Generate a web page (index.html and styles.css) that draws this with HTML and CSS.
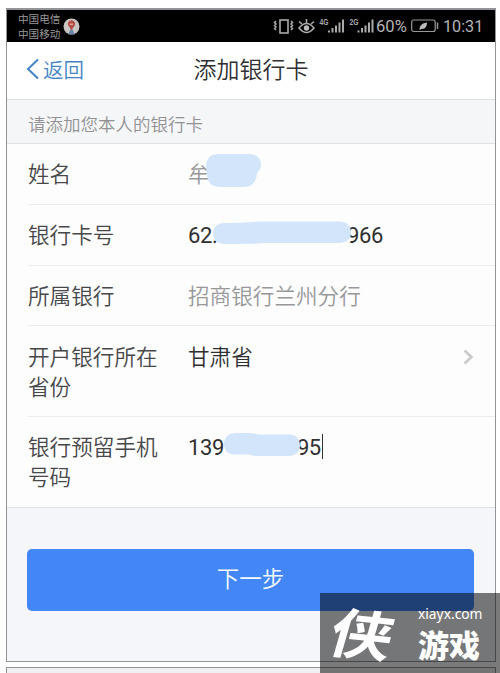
FILE: index.html
```
<!DOCTYPE html>
<html lang="zh-CN">
<head>
<meta charset="utf-8">
<title>添加银行卡</title>
<link rel="stylesheet" href="styles.css">
</head>
<body>
<main class="phone">
  <div class="status">
    <div class="carriers"><span>中国电信</span><span>中国移动</span></div>
    <svg class="pin" width="17" height="17" viewBox="0 0 17 17"><circle cx="8.5" cy="8.5" r="8" fill="#c9c5c3"/><path d="M5 16.5 8.5 9.5l3.5 7z" fill="#7084a5"/><path d="M8.500 12 5.700 8a3.500 3.500 0 1 1 5.600 0z" fill="#b74842"/><path d="M6.800 6.200h3.400" stroke="#ddc" stroke-width="1"/></svg>
    <svg class="icons" width="104" height="22" viewBox="0 0 104 22">
      <g fill="none" stroke="#aaa" stroke-width="1.6">
        <rect x="7" y="5" width="8" height="13"/>
        <path d="M3 6 1.500 7.500 3 9 1.500 10.500 3 12 1.500 13.500 3 15M18 6l1.500 1.500L18 9l1.500 1.500L18 12l1.500 1.500L18 15" stroke-width="1.500"/>
        <path d="M26 13q7.500-9 15 0-7.500 9-15 0zM26 6.500l3 2.500M33.500 4v4M41 6.500l-3 2.500"/>
      </g>
      <circle cx="33.500" cy="13" r="2.700" fill="#bbb"/>
      <g fill="#aaa"><path d="M55 15.500h2v2h-2zM58.500 13h2v4.500h-2zM62 10.500h2v7h-2zM65.500 7.500h2v10h-2zM69 4.500h2v13h-2z"/><path d="M84.500 15.500h2v2h-2zM88 13h2v4.500h-2zM91.500 10.500h2v7h-2zM95 7.500h2v10h-2zM98.500 4.500h2v13h-2z"/></g>
      <g class="net"><text x="46.500" y="10" textLength="9" lengthAdjust="spacingAndGlyphs">4G</text><text x="76.500" y="10" textLength="9" lengthAdjust="spacingAndGlyphs">2G</text></g>
    </svg>
    <span class="percent">60%</span>
    <svg class="battery" width="28" height="14" viewBox="0 0 28 14"><rect x=".7" y="1" width="23.500" height="11.500" rx="2" fill="none" stroke="#999" stroke-width="1.200"/><path d="M26.500 3.500v6.500" stroke="#999" stroke-width="1.500"/><path d="M8.500 10.500q0-6 7.500-7Q16 10.500 10.500 10L8.500 11z" fill="#bbb"/></svg>
    <span class="time">10:31</span>
  </div>
  <header class="nav">
    <a class="back"><svg width="14" height="22" viewBox="0 0 14 22"><path d="M12 1.500 2 11l10 9.500" fill="none" stroke="#4584c4" stroke-width="2"/></svg>返回</a>
    <h1>添加银行卡</h1>
  </header>
  <p class="notice">请添加您本人的银行卡</p>
  <section class="form">
    <div class="row"><label>姓名</label><div class="value muted">牟
      <svg class="mask name-mask" width="56" height="34" viewBox="0 0 56 34"><path d="M12 0H44Q54 1 55 10 55 16 51 19 50 33 38 33H13Q1 32 1 20L0 12Q1 0 12 0z"/></svg></div></div>
    <div class="row"><label>银行卡号</label><div class="value number card"><span>62.</span><span>966</span>
      <svg class="mask card-mask" width="139" height="24" viewBox="0 0 139 24"><path d="M11 2q20 0 34-1.500h82q11 1 11 11.500 0 9-12 10H50q-5 1-39 1Q0 22 0 12 1 2 11 2z"/></svg></div></div>
    <div class="row short"><label>所属银行</label><div class="value muted">招商银行兰州分行</div></div>
    <div class="row tall province"><label>开户银行所在省份</label><div class="value">甘肃省</div>
      <svg class="chevron" width="11" height="16" viewBox="0 0 11 16"><path d="m1.500 1.500 7 6.500-7 6.500" fill="none" stroke="#c9c9cb" stroke-width="2.500"/></svg></div>
    <div class="row tall"><label>银行预留手机号码</label><div class="value number mobile"><span>139</span><span>95</span><i class="caret"></i>
      <svg class="mask mobile-mask" width="78" height="24" viewBox="0 0 78 24"><path d="M12 0h16q5 1 8 1.500h30Q77 2 77 13q0 9-11 10H34q-5 0-8-1.500H12Q1 21 1 11 1 1 12 0z"/></svg></div></div>
  </section>
  <button class="next">下一步</button>
</main>
<div class="next-frame"></div>
<aside class="watermark">
  <span class="brush">侠</span>
  <div class="brand"><span class="site">xiayx.com</span><strong>游戏</strong></div>
</aside>
</body>
</html>
```

FILE: styles.css
```
* { box-sizing: border-box; }
body {
  margin: 0;
  width: 500px;
  height: 673px;
  padding: 8px 4px 0 6px;
  overflow: hidden;
  position: relative;
  background: #fff;
  font-family: Roboto, "Noto Sans CJK SC", sans-serif;
  font-weight: 350;
}
.phone {
  height: 654px;
  border: 1px solid #929497;
  border-top-width: 2px;
  background: #f5f6fa;
}
.status {
  height: 32px;
  background: #000;
  color: #b4b4b4;
  display: flex;
  align-items: center;
  padding-left: 11px;
  font-weight: 400;
}
.carriers {
  width: 44px;
  display: flex;
  flex-direction: column;
  font-size: 10.6px;
  line-height: 15px;
  color: #999;
  white-space: nowrap;
  padding-top: 2px;
}
.pin { margin-left: 1px; }
.icons { margin-left: 193px; flex: none; }
.net text { font: 700 9px "Liberation Sans", sans-serif; fill: #aaa; }
.percent { width: 35px; font-size: 16.6px; margin-left: -1px; }
.battery { flex: none; }
.time { margin-left: 4px; font-size: 16.2px; }
.nav {
  height: 58px;
  display: grid;
  grid-template-columns: 150px 1fr 150px;
  align-items: center;
  background: #fff;
  border-bottom: 1px solid #dcdee2;
  padding-bottom: 3px;
}
.back {
  display: flex;
  align-items: center;
  gap: 3px;
  padding-left: 19px;
  color: #4584c4;
  font-size: 20.5px;
}
.nav h1 {
  margin: -2px 0 0;
  font-size: 23px;
  font-weight: 350;
  text-align: center;
  color: #303033;
  white-space: nowrap;
}
.notice {
  margin: 0;
  height: 44px;
  line-height: 50px;
  padding-left: 21px;
  border-bottom: 1px solid #dfe1e6;
  background: #f5f6f8;
  font-size: 17.5px;
  color: #929294;
}
.form {
  background: #fdfdfd;
  border-bottom: 1px solid #dfe2e6;
  padding-left: 21px;
}
.row {
  height: 61px;
  display: grid;
  grid-template-columns: 135px 1fr 19px;
  column-gap: 25px;
  border-bottom: 1px solid #ececee;
  padding-top: 16px;
  font-size: 21.6px;
  line-height: 30px;
  color: #48484b;
}
.row.short { height: 60px; }
.row.tall { height: 91px; }
.row.province { padding-top: 17px; }
.row:last-child { border-bottom: 0; height: 90px; }
.value { position: relative; height: 30px; color: #303032; }
.value.muted { color: #98989b; }
.number { display: flex; font-size: 22px; font-weight: 400; letter-spacing: -.4px; line-height: 30px; }
.card { justify-content: space-between; margin-right: 68px; }
.mobile { gap: 73px; }
.mask { position: absolute; fill: #d2e5fa; }
.name-mask { left: 18px; top: -6px; }
.card-mask { left: 25px; top: 0; }
.mobile-mask { left: 35px; top: 0; }
.caret { width: 1.5px; height: 25px; margin: 1px 0 0 -72px; background: #333; }
.chevron { margin-top: 6px; margin-left: -13px; }
.next {
  display: block;
  width: 447px;
  height: 62px;
  margin: 41px 0 0 20px;
  border: 0;
  border-radius: 5px;
  background: #4287f5;
  color: #f7fbff;
  font: 350 22.5px "Noto Sans CJK SC", sans-serif;
  padding-bottom: 7px;
}
.next-frame {
  height: 10px;
  margin-top: 5px;
  border: 1px solid #929497;
  background: #f0f0f2;
}
.watermark {
  position: absolute;
  left: 320px;
  top: 593px;
  width: 180px;
  height: 80px;
  background: rgba(0, 0, 0, .52);
  color: #fff;
  display: flex;
}
.brush {
  width: 68px;
  margin-left: 17px;
  font: 700 54px/80px "Noto Sans CJK SC", sans-serif;
  transform: rotate(6deg) skewX(-10deg) scaleX(1.15);
}
.brand { margin-left: 13px; padding-top: 10px; display: flex; flex-direction: column; gap: 3px; }
.site { font: 13.8px/22px "Noto Sans", sans-serif; }
.brand strong { font: 900 31px/32px "Noto Sans CJK SC", sans-serif; }
```
